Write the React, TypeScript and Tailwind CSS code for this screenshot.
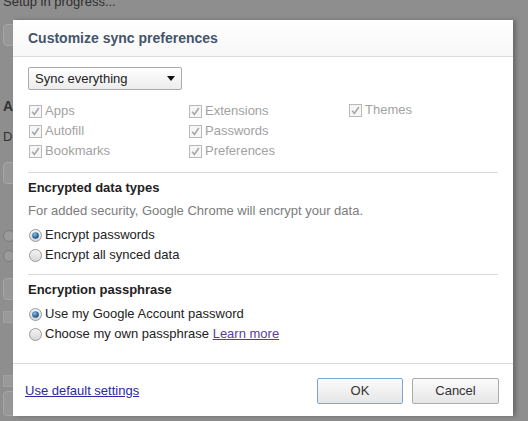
const font = "font-['Liberation_Sans',Arial,sans-serif]";

function Check() {
  return (
    <svg width="13" height="13" viewBox="0 0 13 13" className="shrink-0">
      <rect x="0.5" y="0.5" width="12" height="12" fill="#f6f6f6" stroke="#b9b9b9" />
      <path d="M3.2 6.8 L5.4 9.4 L9.8 3" fill="none" stroke="#a6a6a6" strokeWidth="1.6" />
    </svg>
  );
}

function Radio({ on }: { on?: boolean }) {
  return (
    <svg width="13" height="13" viewBox="0 0 13 13" className="shrink-0">
      <defs>
        <linearGradient id="rg" x1="0" y1="0" x2="0" y2="1">
          <stop offset="0" stopColor="#f4f4f4" />
          <stop offset="1" stopColor="#d6d6d6" />
        </linearGradient>
        <radialGradient id="dot" cx="0.4" cy="0.35" r="0.7">
          <stop offset="0" stopColor="#8cc4ee" />
          <stop offset="0.6" stopColor="#2f6fa6" />
          <stop offset="1" stopColor="#17406a" />
        </radialGradient>
      </defs>
      <circle cx="6.5" cy="6.5" r="6" fill="url(#rg)" stroke="#9a9a9a" />
      {on ? <circle cx="6.5" cy="6.5" r="3.3" fill="url(#dot)" /> : null}
    </svg>
  );
}

function CheckItem({ label }: { label: string }) {
  return (
    <div className="flex h-5 items-center gap-[3px] pl-[1px] text-[13px] text-[#a2a2a2]">
      <Check />
      <span>{label}</span>
    </div>
  );
}

function RadioItem({ on, children }: { on?: boolean; children: React.ReactNode }) {
  return (
    <div className="flex h-5 items-center gap-[3px] pl-[1px] text-[13px] text-[#222]">
      <Radio on={on} />
      <span>{children}</span>
    </div>
  );
}

function Background() {
  return (
    <div className="flex h-[421px] w-[528px] flex-col bg-[#8e8e8e] pl-[3px] text-[#3c3c3c]">
      <div className="-mt-[8px] text-[13px] text-[#2e2e2e]">Setup in progress...</div>
      <div className="mt-[12px] h-[22px] w-[40px] rounded-sm border border-[#a6a6a6] bg-[#979797]" />
      <div className="mt-[50px] text-[14px] font-bold text-[#333]">A</div>
      <div className="mt-[10px] text-[13px] text-[#333]">D</div>
      <div className="mt-[16px] h-[22px] w-[40px] rounded-sm border border-[#a6a6a6] bg-[#979797]" />
      <div className="mt-[46px] h-[12px] w-[12px] rounded-full border border-[#7a7a7a] bg-[#9a9a9a]" />
      <div className="mt-[8px] h-[12px] w-[12px] rounded-full border border-[#7a7a7a] bg-[#9a9a9a]" />
      <div className="mt-[16px] h-[22px] w-[40px] rounded-sm border border-[#a6a6a6] bg-[#979797]" />
      <div className="mt-[11px] h-[12px] w-[12px] border border-[#a0a0a0] bg-[#999]" />
      <div className="mt-[52px] h-[12px] w-[12px] border border-[#a0a0a0] bg-[#999]" />
      <div className="mt-[4px] h-[25px] w-[40px] rounded-sm border border-[#a6a6a6] bg-[#979797]" />
    </div>
  );
}

export default function App() {
  return (
    <div className={`relative h-[421px] w-[528px] overflow-hidden ${font}`}>
      <Background />
      <div className="absolute left-[13px] top-[20px] flex h-[396px] w-[500px] flex-col bg-white shadow-[3px_0_4px_rgba(0,0,0,0.25)]">
        <div className="flex h-[37px] shrink-0 items-center border-b border-[#dcdcdc] bg-gradient-to-b from-white to-[#f7f7f7] px-[15px] text-[14px] font-bold text-[#44546a]">
          Customize sync preferences
        </div>
        <div className="flex flex-col px-[15px]">
          <div className="mt-[10px] flex h-[23px] w-[154px] items-center justify-between rounded-[2px] border border-[#aaaaaa] bg-gradient-to-b from-white to-[#ececec] pl-[6px] pr-[6px] text-[13px] text-[#222]">
            <span>Sync everything</span>
            <svg width="8" height="5" viewBox="0 0 8 5">
              <path d="M0 0 H8 L4 5 Z" fill="#111" />
            </svg>
          </div>
          <div className="mt-[11px] grid grid-cols-[160px_160px_160px]">
            <div className="flex flex-col">
              <CheckItem label="Apps" />
              <CheckItem label="Autofill" />
              <CheckItem label="Bookmarks" />
            </div>
            <div className="flex flex-col">
              <CheckItem label="Extensions" />
              <CheckItem label="Passwords" />
              <CheckItem label="Preferences" />
            </div>
            <div className="-mt-[1px] flex flex-col">
              <CheckItem label="Themes" />
            </div>
          </div>
          <div className="mt-[11px] h-px bg-[#d9d9d9]" />
          <div className="mt-[7px] h-4 text-[13px] font-bold leading-4 text-[#222]">Encrypted data types</div>
          <div className="mt-[7px] h-4 text-[13px] leading-4 text-[#7c7c7c]">
            For added security, Google Chrome will encrypt your data.
          </div>
          <div className="mt-[6px] flex flex-col">
            <RadioItem on>Encrypt passwords</RadioItem>
            <RadioItem>Encrypt all synced data</RadioItem>
          </div>
          <div className="mt-[9px] h-px bg-[#d9d9d9]" />
          <div className="mt-[7px] h-4 text-[13px] font-bold leading-4 text-[#222]">Encryption passphrase</div>
          <div className="mt-[6px] flex flex-col">
            <RadioItem on>Use my Google Account password</RadioItem>
            <RadioItem>
              Choose my own passphrase <span className="text-[#5b3e9c] underline">Learn more</span>
            </RadioItem>
          </div>
        </div>
        <div className="mt-[19px] flex flex-1 items-center justify-between border-t border-[#dcdcdc] pl-[12px] pr-[14px] pt-[1px]">
          <span className="text-[13px] text-[#2a2aa4] underline">Use default settings</span>
          <div className="flex gap-[9px]">
            <button
              type="button"
              className="h-[26px] w-[86px] rounded-[2px] border border-[#7aa7d6] bg-gradient-to-b from-[#fbfbfb] to-[#e6e6e6] text-[13px] text-[#333]"
            >
              OK
            </button>
            <button
              type="button"
              className="h-[26px] w-[87px] rounded-[2px] border border-[#ababab] bg-gradient-to-b from-[#fbfbfb] to-[#e6e6e6] text-[13px] text-[#333]"
            >
              Cancel
            </button>
          </div>
        </div>
      </div>
    </div>
  );
}
